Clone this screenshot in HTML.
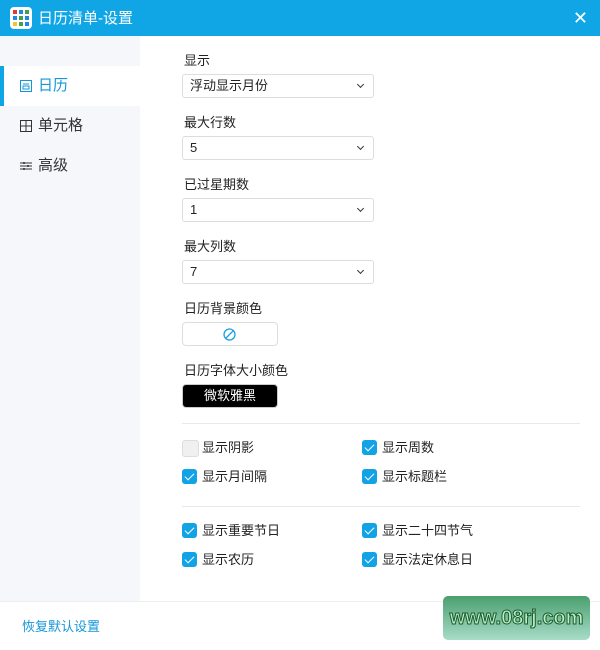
<!DOCTYPE html>
<html><head><meta charset="utf-8"><style>
*{margin:0;padding:0;box-sizing:border-box}
body{width:600px;height:650px;position:relative;background:#fff;font-family:"Liberation Sans","Noto Sans CJK SC",sans-serif;font-size:13px;color:#222;overflow:hidden}
.tb{position:absolute;left:0;top:0;width:600px;height:36px;background:#10a6e6;color:#fff}
.logo{position:absolute;left:10px;top:7px;width:22px;height:22px;background:#fff;border-radius:4px}
.logo i{position:absolute;width:4px;height:4px}
.tt{position:absolute;left:38px;top:7px;font-size:15px}
.x{position:absolute;right:12px;top:8px;font-size:18px}
.side{position:absolute;left:0;top:36px;width:140px;height:565px;background:#f5f7fa}
.it{position:absolute;left:0;width:140px;height:40px;line-height:40px;padding-left:38px;font-size:15px;color:#333}
.it.a{background:#fff;color:#1496d8}
.it.a:before{content:"";position:absolute;left:0;top:0;width:4px;height:40px;background:#10a6e6}
.ic{position:absolute;left:20px;top:14px;width:12px;height:12px}
.lb{position:absolute;left:184px;font-size:13px}
.sel{position:absolute;left:182px;width:192px;height:24px;border:1px solid #ddd;border-radius:3px;padding-left:7px;line-height:22px;font-size:13px}
.sel:after{content:"";position:absolute;right:10px;top:7px;width:4px;height:4px;border-right:1.3px solid #333;border-bottom:1.3px solid #333;transform:rotate(45deg)}
.btn{position:absolute;left:182px;width:96px;height:24px;border:1px solid #ddd;border-radius:4px}
.hr{position:absolute;left:182px;width:398px;height:1px;background:#e8e8e8}
.cb{position:absolute;font-size:13px;padding-left:20px;line-height:16px}
.cb:before{content:"";position:absolute;left:0;top:0;width:15px;height:15px;border-radius:3px;background:#12a3e6}
.cb.c:after{content:"";position:absolute;left:5px;top:2px;width:4px;height:8px;border-right:1.5px solid #fff;border-bottom:1.5px solid #fff;transform:rotate(45deg)}
.cb.u:before{background:#f0f0f2;border:1px solid #ddd}
.foot{position:absolute;left:0;top:601px;width:600px;height:1px;background:#eee}
</style></head><body>
<div class="tb">
<div class="logo">
<i style="left:3px;top:3px;background:#e53935"></i><i style="left:9px;top:3px;background:#1e88e5"></i><i style="left:15px;top:3px;background:#43a047"></i>
<i style="left:3px;top:9px;background:#1e88e5"></i><i style="left:9px;top:9px;background:#43a047"></i><i style="left:15px;top:9px;background:#1e88e5"></i>
<i style="left:3px;top:15px;background:#fbc02d"></i><i style="left:9px;top:15px;background:#43a047"></i><i style="left:15px;top:15px;background:#1e88e5"></i>
</div>
<div class="tt">日历清单-设置</div>
<div class="x">✕</div>
</div>
<div class="side">
<div class="it a" style="top:30px"><svg class="ic" viewBox="0 0 12 12"><rect x=".5" y=".5" width="11" height="11" fill="none" stroke="#1496d8"/><path d="M3 4h6M3 6h6v3H3z" fill="none" stroke="#1496d8"/></svg>日历</div>
<div class="it" style="top:70px"><svg class="ic" viewBox="0 0 12 12"><rect x=".5" y=".5" width="11" height="11" fill="none" stroke="#333"/><path d="M6 0v12M0 6h12" stroke="#333"/></svg>单元格</div>
<div class="it" style="top:110px"><svg class="ic" viewBox="0 0 12 12"><path d="M0 3h12M0 6h12M0 9h12" stroke="#333"/><path d="M4 2v2M8 5v2M4 8v2" stroke="#333" stroke-width="1.5"/></svg>高级</div>
</div>
<div class="lb" style="top:50px">显示</div>
<div class="sel" style="top:74px">浮动显示月份</div>
<div class="lb" style="top:112px">最大行数</div>
<div class="sel" style="top:136px">5</div>
<div class="lb" style="top:174px">已过星期数</div>
<div class="sel" style="top:198px">1</div>
<div class="lb" style="top:236px">最大列数</div>
<div class="sel" style="top:260px">7</div>
<div class="lb" style="top:298px">日历背景颜色</div>
<div class="btn" style="top:322px"><svg style="position:absolute;left:40px;top:5px" width="13" height="13" viewBox="0 0 13 13"><circle cx="6.5" cy="6.5" r="5.5" fill="none" stroke="#1ba1e2" stroke-width="1.3"/><path d="M3 10L10 3" stroke="#1ba1e2" stroke-width="1.3"/></svg></div>
<div class="lb" style="top:360px">日历字体大小颜色</div>
<div class="btn" style="top:384px;background:#000;color:#fff;text-align:center;line-height:22px;border-color:#ccc">微软雅黑</div>
<div class="hr" style="top:423px"></div>
<div class="cb u" style="left:182px;top:440px">显示阴影</div>
<div class="cb c" style="left:362px;top:440px">显示周数</div>
<div class="cb c" style="left:182px;top:469px">显示月间隔</div>
<div class="cb c" style="left:362px;top:469px">显示标题栏</div>
<div class="hr" style="top:506px"></div>
<div class="cb c" style="left:182px;top:523px">显示重要节日</div>
<div class="cb c" style="left:362px;top:523px">显示二十四节气</div>
<div class="cb c" style="left:182px;top:552px">显示农历</div>
<div class="cb c" style="left:362px;top:552px">显示法定休息日</div>
<div class="foot"></div>
<div style="position:absolute;left:22px;top:616px;color:#1496d8;font-size:13px">恢复默认设置</div>
<div style="position:absolute;left:443px;top:596px;width:147px;height:44px;border-radius:5px;background:linear-gradient(#4a9f6e,#a8dcc8);color:#b8f0c0;font:bold 20px 'Liberation Sans',sans-serif;text-align:center;line-height:44px;-webkit-text-stroke:1px #1d5a33">www.08rj.com</div>
</body></html>
